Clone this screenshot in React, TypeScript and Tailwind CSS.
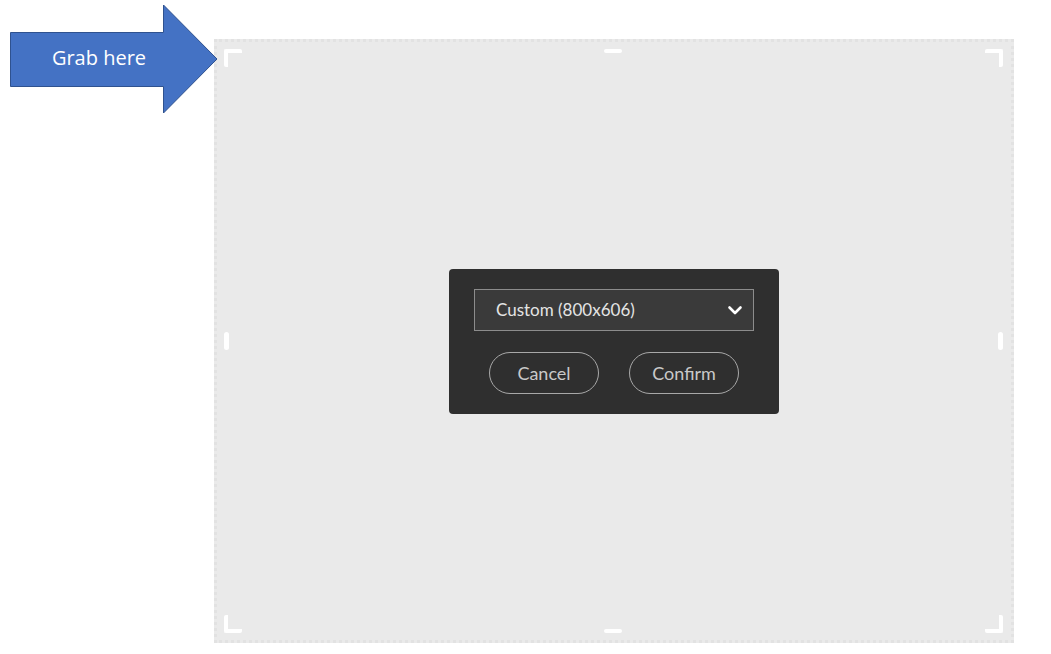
import React from 'react';

// corner bracket of the crop frame
const Bracket: React.FC<{ sides: string; align: string }> = ({ sides, align }) => (
    <div className={`w-[18px] h-[18px] border-white rounded-[2px] ${sides} ${align}`}></div>
);

const App: React.FC = () => {
    return (
        <div className="relative w-[1051px] h-[654px] bg-white overflow-hidden font-['Lato',sans-serif]">
            {/* canvas */}
            <div className="ml-[214px] mt-[39px] w-[800px] h-[604px] border-[3px] border-dotted border-[#e2e2e2] bg-[#eaeaea] relative flex items-center justify-center">
                {/* crop handles overlay */}
                <div className="absolute inset-[7px] right-[8px] grid grid-cols-3 grid-rows-3 pointer-events-none">
                    <Bracket sides="border-l-4 border-t-4" align="self-start justify-self-start" />
                    <div className="self-start justify-self-center w-[18px] h-[4px] rounded-full bg-white"></div>
                    <Bracket sides="border-r-4 border-t-4" align="self-start justify-self-end" />
                    <div className="self-center justify-self-start w-[5px] h-[18px] rounded-full bg-white"></div>
                    <div></div>
                    <div className="self-center justify-self-end w-[5px] h-[18px] rounded-full bg-white"></div>
                    <Bracket sides="border-l-4 border-b-4" align="self-end justify-self-start" />
                    <div className="self-end justify-self-center w-[18px] h-[4px] rounded-full bg-white"></div>
                    <Bracket sides="border-r-4 border-b-4" align="self-end justify-self-end" />
                </div>

                <div className="relative w-[330px] h-[145px] bg-[#2f2f2f] rounded-[4px] px-[25px] pt-[20px] mt-[1px]">
                    <div className="h-[42px] bg-[#3a3a3a] border border-[#8c8c8c] flex items-center justify-between pl-[21px] pr-[10px]">
                        <span className="text-[17px] text-[#e4e4e4]">Custom (800x606)</span>
                        <svg width="16" height="12" viewBox="0 0 16 12" fill="none" stroke="#ffffff" strokeWidth="2.6" strokeLinecap="round" strokeLinejoin="round">
                            <polyline points="2.5 3.5 8 9 13.5 3.5" />
                        </svg>
                    </div>
                    <div className="flex justify-center gap-[30px] mt-[21px]">
                        <button className="w-[110px] h-[42px] rounded-full border border-[#a8a8a8] text-[18px] text-[#c9c9c9]">Cancel</button>
                        <button className="w-[110px] h-[42px] rounded-full border border-[#a8a8a8] text-[18px] text-[#c9c9c9]">Confirm</button>
                    </div>
                </div>
            </div>

            {/* callout arrow */}
            <div className="absolute left-0 top-0 w-[220px] h-[116px]">
                <svg width="220" height="116" viewBox="0 0 220 116">
                    <polygon points="10.5,32.5 163.5,32.5 163.5,5 217,59 163.5,113 163.5,86.5 10.5,86.5" fill="#4472c4" stroke="#2f528f" strokeWidth="1" />
                </svg>
                <div className="absolute inset-0 pl-[10px] pr-[32px] flex items-center justify-center">
                    <span className="font-['Open_Sans',sans-serif] text-[20px] text-white">Grab here</span>
                </div>
            </div>
        </div>
    );
};

export default App;
